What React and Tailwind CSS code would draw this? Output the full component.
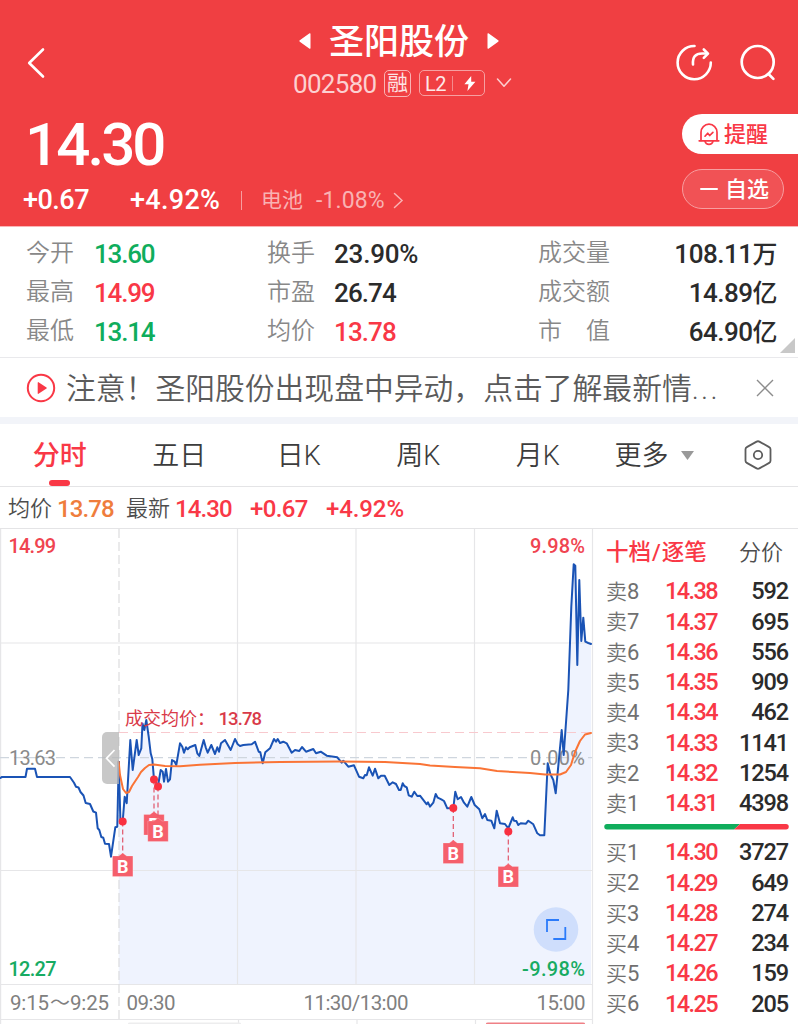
import React from "react";

const stats = [
  [
    { label: "今开", value: "13.60", color: "text-[#0fad5c]" },
    { label: "最高", value: "14.99", color: "text-[#f93846]" },
    { label: "最低", value: "13.14", color: "text-[#0fad5c]" },
  ],
  [
    { label: "换手", value: "23.90%", color: "text-[#2b2b2b]" },
    { label: "市盈", value: "26.74", color: "text-[#2b2b2b]" },
    { label: "均价", value: "13.78", color: "text-[#f93846]" },
  ],
  [
    { label: "成交量", value: "108.11", unit: "万", color: "text-[#2b2b2b]" },
    { label: "成交额", value: "14.89", unit: "亿", color: "text-[#2b2b2b]" },
    { label: "市　值", value: "64.90", unit: "亿", color: "text-[#2b2b2b]" },
  ],
];

const tabs = ["分时", "五日", "日K", "周K", "月K"];

const sells = [
  ["卖", "8", "14.38", "592"],
  ["卖", "7", "14.37", "695"],
  ["卖", "6", "14.36", "556"],
  ["卖", "5", "14.35", "909"],
  ["卖", "4", "14.34", "462"],
  ["卖", "3", "14.33", "1141"],
  ["卖", "2", "14.32", "1254"],
  ["卖", "1", "14.31", "4398"],
];

const buys = [
  ["买", "1", "14.30", "3727"],
  ["买", "2", "14.29", "649"],
  ["买", "3", "14.28", "274"],
  ["买", "4", "14.27", "234"],
  ["买", "5", "14.26", "159"],
  ["买", "6", "14.25", "205"],
];

// call auction, 9:15 - 9:25
const auction =
  "0,778 2,777 25.5,777 27,768.7 35,768.7 37,777 70,777 74,782.7 76,786.7 78.5,787.5 80.5,792 83.5,795.5 85.7,803 90,804 93.3,811.5 96,812.7 97.7,828.3 99.3,830 101.3,837 103.3,837.7 105,843.7 109,844 111,856.7 115.3,827.3 117.3,826.7";

const price =
  "118.7,761.7 120.5,823 122.7,821 124.7,796.7 126.7,803.3 130.3,740 132.7,770 136.7,740 138.7,755 141.3,748.3 142.5,723.5 144.3,730 146.3,720 148.7,736.7 150.7,753.3 152.3,759 154,779.3 158,786 160.7,770 162.7,771.7 164,781.7 166,769 168,781.7 170,779.3 172,760 174.7,761.7 176.3,765 180,743.3 182.3,746.7 184,752.7 186,747.3 187.7,749.3 189.7,747.3 195.3,745 197.3,753.3 199.3,756 203.7,740 205.7,747.3 207.7,752.7 211.3,745 215,754 217.3,747.3 219,751.7 221,743.3 225,740 230.7,750 235,739 237.7,744.3 240,746 243.3,745 251.7,744.3 255,741.7 258.7,751.7 260.3,752.3 262.7,763.3 265.3,752.3 270,748.3 274,739 276,741.7 277.7,739 280,743 283.3,741.7 286.7,743.3 291.7,752.7 295,750 299.3,751 302,747 306,751.7 313.3,749 316,753.3 320.7,751.7 326.7,755.7 337.3,757.3 341.7,762.7 343.3,760.7 348.3,766.7 354,765.3 359,776.7 363.3,778.3 365,775 366.7,775.3 369,767.3 372.7,775.7 375,768.7 378.3,778.3 381,775.7 384.7,775.7 389.3,785 392.7,782.3 396,784 399,790 400.7,790 402.7,783.3 404.3,786 406.7,787.3 408.7,795.3 411.7,796.7 414.3,791.7 417.3,796 420,795.7 426.7,804.3 428,802.3 430,806.7 433.3,802.7 435.7,794 437.7,797.7 441.3,799.3 444,801 447.3,808.3 453.3,808 455.3,791.7 457.7,799.3 461,797 464,802.7 467.3,806.7 471.3,797 474.7,805 479.3,809.3 482.3,818.3 485,814 487.3,820 491.3,820.7 494.3,828.3 496.7,810.7 500,823.3 505,824 508.3,828.3 512.7,817.3 514,820.7 516.3,821 518.3,825 520.7,823.3 526,823.7 528.3,820.7 533.3,824.3 537.3,833.3 540,835.3 544.3,835.3 547.7,763.3 550.3,774 553.3,780 555.7,793.3 561.7,730 563.7,755 568.3,690 571.3,606.7 573.7,564.3 575.3,565.7 577.3,665 579.3,580 581.3,641 583.3,617.7 585.3,641.7 588.3,643 591,644";

const average =
  "118.7,762 120,775 123,789 126,793 129,792 132,786 138,777 141,772 145,768 149,765 154,764.5 165,766 180,766.3 200,764.8 235,763 280,762 340,761.5 385,762 420,764 430,765.5 455,767 480,768.3 497,771 530,773 545,774.5 560,774.5 566,772 571,765 575,752 580,741 585,734.5 591,733";

const trades = [
  { x: 122.7, y: 821.5, box: 856 },
  { x: 154, y: 779.5, box: 814.5 },
  { x: 158, y: 786.5, box: 821 },
  { x: 453.3, y: 808, box: 843 },
  { x: 508.3, y: 831.5, box: 866.5 },
];

const Header = () => {
  return (
    <header className="h-[226px] bg-[#f03f42] text-white">
      <div className="flex h-[112px] justify-between">
        <div className="w-[220px] pl-[26px] pt-[47px]">
          <svg width="20" height="32" viewBox="0 0 20 32" fill="none">
            <path
              d="M17 2.5 3.2 16 17 29.5"
              stroke="#fff"
              strokeWidth="2.6"
              strokeLinecap="round"
              strokeLinejoin="round"
            />
          </svg>
        </div>

        <div className="flex flex-col items-center pt-[22px]">
          <div className="flex h-[37px] items-center gap-[18px]">
            <svg width="12" height="16" viewBox="0 0 12 16">
              <path d="M11.5 1v14a.8.8 0 0 1-1.3.6L.8 8.7a.9.9 0 0 1 0-1.4L10.2.4a.8.8 0 0 1 1.3.6z" fill="#fff" />
            </svg>
            <p className="pt-[3px] text-[35px] leading-none font-medium">圣阳股份</p>
            <svg width="12" height="16" viewBox="0 0 12 16">
              <path d="M.5 1v14a.8.8 0 0 0 1.3.6l9.4-6.9a.9.9 0 0 0 0-1.4L1.8.4A.8.8 0 0 0 .5 1z" fill="#fff" />
            </svg>
          </div>
          <div className="mt-[10px] ml-[7px] flex h-[28px] items-center">
            <p className="w-[84px] pt-[2px] text-[26px] leading-none tracking-[-0.7px] text-[#fcd0d1]">
              002580
            </p>
            <p className="ml-[7px] flex h-[27px] w-[27px] items-center justify-center rounded-[5px] border border-[#f9b3b4] text-[21px] leading-none text-[#fde4e4]">
              融
            </p>
            <div className="ml-[8px] flex h-[26px] w-[66px] items-center rounded-[5px] border border-[#f6a0a1] pl-[5px]">
              <p className="w-[22px] pt-px text-[20px] leading-none tracking-[-0.5px] text-[#fde8e8]">
                L2
              </p>
              <span className="ml-[5px] h-[15px] w-px bg-[#f58a8c]" />
              <svg className="ml-[11px]" width="12" height="15" viewBox="0 0 12 15">
                <path d="M7.2 0 .4 8.3h4.1L3.4 15l8-9.2H7.2z" fill="#fff" />
              </svg>
            </div>
            <svg className="ml-[11px]" width="16" height="10" viewBox="0 0 16 10" fill="none">
              <path
                d="M1.5 1 8 8.2 14.5 1"
                stroke="#fcd0d1"
                strokeWidth="1.5"
                strokeLinecap="round"
                strokeLinejoin="round"
              />
            </svg>
          </div>
        </div>

        <div className="flex w-[220px] justify-end gap-[26px] pt-[43px] pr-[21px]">
          <svg width="38" height="38" viewBox="0 0 38 38" fill="none">
            <g stroke="#fff" strokeWidth="2.6" strokeLinecap="round" strokeLinejoin="round">
              <path d="M19.5 3A16.6 16.6 0 1 0 35.8 19.5" />
              <path d="M18 21.5c-.6-7.5 2.5-11 9-11h5" />
              <path d="M28.8 6.5 33 10.6l-4.2 4.2" />
            </g>
          </svg>
          <svg width="38" height="38" viewBox="0 0 38 38" fill="none">
            <g stroke="#fff" strokeWidth="2.7" strokeLinecap="round">
              <circle cx="18.7" cy="19" r="16" />
              <path d="m29.5 31 4.9 4.9" />
            </g>
          </svg>
        </div>
      </div>

      <div className="flex h-[114px] justify-between">
        <div>
          <p className="mt-[3px] pl-[25px] text-[60px] leading-none font-medium tracking-[-2.9px]">
            14.30
          </p>
          <div className="mt-[9px] flex h-[32px] items-center pl-[23px] leading-none">
            <p className="w-[107px] pt-px text-[27px] font-medium tracking-[-0.5px]">+0.67</p>
            <p className="w-[111px] pt-px text-[27px] font-medium tracking-[0.3px]">+4.92%</p>
            <span className="h-[19px] w-px bg-[#f79ea0]" />
            <p className="ml-[19px] w-[55px] text-[21px] text-[#f9b2b3]">电池</p>
            <p className="text-[23px] tracking-[0.1px] text-[#f9b2b3]">-1.08%</p>
            <svg className="ml-[8px]" width="11" height="17" viewBox="0 0 11 17" fill="none">
              <path d="m1.5 1.5 7.5 7-7.5 7" stroke="#f9b2b3" strokeWidth="1.5" strokeLinecap="round" />
            </svg>
          </div>
        </div>

        <div className="flex w-[116px] flex-col pt-[2px]">
          <button className="flex h-[40px] items-center rounded-l-full bg-white pl-[16px] text-[#f93846]">
            <svg width="22" height="23" viewBox="0 0 22 23" fill="none">
              <g stroke="#f93846" strokeWidth="1.7" strokeLinecap="round" strokeLinejoin="round">
                <path d="M3 17.5V9.2a8 8 0 0 1 16 0v8.3" />
                <path d="M1.2 17.8h19.6" />
                <path d="M7 18.4c1 4 7 4 8 0" />
                <path d="m7 13.2 2.7-3 2 2.3 3.2-3.2" />
              </g>
            </svg>
            <span className="ml-[4px] pt-[2px] text-[22px] leading-none font-medium">提醒</span>
          </button>
          <button className="mt-[15px] flex h-[40px] w-[102px] items-center rounded-full border border-[#f79ea0] bg-[#f15255] pl-[17px]">
            <span className="h-[2px] w-[18px] rounded bg-white" />
            <span className="ml-[7px] pt-[2px] text-[22px] leading-none font-medium">自选</span>
          </button>
        </div>
      </div>
    </header>
  );
};

const Stats = () => {
  return (
    <section className="flex h-[132px] border-t border-b border-t-[#fbb4b6] border-b-[#e9e9ec] pt-[7px] pl-[26px]">
      <div className="w-[241px]">
        {stats[0].map((s) => (
          <div key={s.label} className="flex h-[39px] items-center leading-none">
            <p className="w-[68px] pb-[2px] text-[24px] font-[350] text-[#888]">{s.label}</p>
            <p className={`pt-[1px] text-[26px] font-medium tracking-[-1.2px] ${s.color}`}>
              {s.value}
            </p>
          </div>
        ))}
      </div>
      <div className="w-[271px]">
        {stats[1].map((s) => (
          <div key={s.label} className="flex h-[39px] items-center leading-none">
            <p className="w-[67px] pb-[2px] text-[24px] font-[350] text-[#888]">{s.label}</p>
            <p
              className={`pt-[1px] text-[26px] font-medium ${
                s.value.includes("%") ? "tracking-[-0.2px]" : "tracking-[-0.9px]"
              } ${s.color}`}
            >
              {s.value}
            </p>
          </div>
        ))}
      </div>
      <div className="w-[239px]">
        {stats[2].map((s) => (
          <div key={s.label} className="flex h-[39px] items-center justify-between leading-none">
            <p className="pb-[2px] text-[24px] font-[350] text-[#888]">{s.label}</p>
            <p className={`pt-[1px] text-[26px] font-medium tracking-[-0.5px] ${s.color}`}>
              {s.value}
              <span className="text-[25px]">{s.unit}</span>
            </p>
          </div>
        ))}
      </div>
      <svg className="mt-auto mb-[4px] ml-[3px]" width="15" height="15" viewBox="0 0 15 15">
        <path d="M15 0v15H0z" fill="#c8c8c8" />
      </svg>
    </section>
  );
};

const Notice = () => {
  return (
    <section className="flex h-[66px] items-center border-b-[7px] border-[#f2f4f9] pl-[26px]">
      <svg width="30" height="30" viewBox="0 0 30 30" fill="none">
        <circle cx="15" cy="15" r="13.2" stroke="#f93846" strokeWidth="2" />
        <path d="M11.7 9.6v10.8a.5.5 0 0 0 .8.4l8-5.3a.6.6 0 0 0 0-1l-8-5.3a.5.5 0 0 0-.8.4z" fill="#f93846" />
      </svg>
      <p className="ml-[10px] w-[656px] pt-[3px] text-[29.8px] leading-none font-[350] whitespace-nowrap text-[#5a5a5a]">
        注意！圣阳股份出现盘中异动，点击了解最新情
        <span className="tracking-[2.2px]">...</span>
      </p>
      <svg className="ml-auto mr-[24px]" width="18" height="18" viewBox="0 0 18 18">
        <path d="m1 1 16 16M17 1 1 17" stroke="#8c8c8c" strokeWidth="1.4" />
      </svg>
    </section>
  );
};

const Tabs = () => {
  return (
    <nav className="flex h-[63px] border-b border-[#e4e4e6] text-[27px] leading-none text-[#3c3c3c]">
      {tabs.map((tab, i) => (
        <div key={tab} className="flex w-[119.5px] flex-col items-center pt-[19px]">
          <span className={i === 0 ? "font-medium text-[#f93846]" : "font-[350]"}>{tab}</span>
          {i === 0 && <span className="mt-[10px] h-[6px] w-[21px] rounded-full bg-[#f93846]" />}
        </div>
      ))}
      <div className="ml-[17px] flex h-[63px] items-center">
        <span className="w-[66px] pt-[2px] font-[350]">更多</span>
        <svg width="13" height="9" viewBox="0 0 13 9">
          <path d="M0 0h13L6.5 9z" fill="#999" />
        </svg>
      </div>
      <svg className="mt-[16px] ml-[50px]" width="28" height="30" viewBox="0 0 28 30" fill="none">
        <path
          d="M12.6 1.6a3 3 0 0 1 2.8 0l9.8 5.5a2.4 2.4 0 0 1 1.3 2.2v11.4a2.4 2.4 0 0 1-1.3 2.2l-9.8 5.5a3 3 0 0 1-2.8 0l-9.8-5.5a2.4 2.4 0 0 1-1.3-2.2V9.3a2.4 2.4 0 0 1 1.3-2.2z"
          stroke="#5c5c5c"
          strokeWidth="1.8"
        />
        <circle cx="14" cy="15" r="4.2" stroke="#5c5c5c" strokeWidth="1.8" />
      </svg>
    </nav>
  );
};

const Chart = () => {
  return (
    <svg className="shrink-0" width="594" height="495" viewBox="0 529 594 495">
      <polygon points={`118.7,984 ${price} 591,984`} fill="#eff3fe" />

      <g stroke="#e6e6e8" strokeWidth="1.2">
        <path d="M.6 529V1024M237.5 529V984M356 529V984M474.5 529V984M592.5 529V1024" />
        <path d="M0 643H592M0 870.5H592M0 984.5H592M0 1019.5H592" />
        <path d="M238.5 1020v4M357 1020v4M475.5 1020v4" />
      </g>
      <path d="M119 529V1019" stroke="#dcdcde" strokeWidth="1.2" strokeDasharray="9 4" />
      <path d="M0 757.7H592" stroke="#cfd6de" strokeWidth="1.2" strokeDasharray="9 5" />
      <path d="M119 732.5H592" stroke="#f8c9ce" strokeWidth="1.2" strokeDasharray="9 5" />
      <path d="M128 1024v-.5q0-1 2-1h109q2 0 2 1v.5z" fill="#ededee" />
      <path d="M486 1024v-.5q0-1 2-1h95q2 0 2 1v.5z" fill="#ef8086" />

      <g fontSize="20" fill="#8a8a8a">
        <text x="9" y="765" textLength="47">13.63</text>
        <text x="530" y="765" textLength="55">0.00%</text>
      </g>

      <g fill="none" strokeLinejoin="round" strokeLinecap="round">
        <polyline points={`${auction} 118.7,761.7`} stroke="#1a53b5" strokeWidth="2" />
        <polyline points={price} stroke="#1a53b5" strokeWidth="2" />
        <polyline points={average} stroke="#fa7436" strokeWidth="2" />
      </g>

      <path d="M119 732h-12a5 5 0 0 0-5 5v42a5 5 0 0 0 5 5h12z" fill="#b5b5b5" fillOpacity=".75" />
      <path d="m114.5 750-8 8.3 8 8.3" fill="none" stroke="#fff" strokeWidth="1.7" />

      <g fill="#d93a49">
        <text x="125" y="725" fontSize="18" fontWeight="400">成交均价：</text>
        <text x="218.5" y="725" fontSize="18.5" fontWeight="500" textLength="43.5">13.78</text>
      </g>

      {trades.map((t) => (
        <g key={t.x}>
          <path
            d={`M${t.x} ${t.y}V${t.box - 2}`}
            stroke="#e0566a"
            strokeWidth="1.2"
            strokeDasharray="5 3"
          />
          <circle cx={t.x} cy={t.y} r="4" fill="#f93040" />
          <path
            d={`M${t.x - 10.2} ${t.box}h6.2l4-3 4 3h6.2v20.5h-20.4z`}
            fill="#f55f6c"
            stroke="#fff"
            strokeOpacity=".35"
            strokeWidth=".6"
          />
          <text
            x={t.x}
            y={t.box + 16.6}
            textAnchor="middle"
            fontSize="18"
            fontWeight="700"
            fill="#fff"
          >
            B
          </text>
        </g>
      ))}

      <circle cx="556" cy="929.5" r="22.3" fill="#cfdefc" />
      <path
        d="M547 932v-12h12M565.3 927v12h-12"
        fill="none"
        stroke="#2b7bfa"
        strokeWidth="1.8"
      />

      <g fontSize="20" fontWeight="500">
        <text x="8.5" y="553" fill="#f04450" textLength="47.5">14.99</text>
        <text x="530" y="553" fill="#f04450" textLength="55">9.98%</text>
        <text x="8.5" y="976" fill="#17ab62" textLength="48">12.27</text>
        <text x="522" y="976" fill="#17ab62" textLength="63">-9.98%</text>
      </g>
      <g fontSize="20.5" fill="#808080">
        <text x="10" y="1010" textLength="39">9:15</text>
        <text x="50" y="1010" fontSize="20" textLength="18">～</text>
        <text x="70" y="1010" textLength="39">9:25</text>
        <text x="126.5" y="1010" textLength="49">09:30</text>
        <text x="303.5" y="1010" textLength="105">11:30/13:00</text>
        <text x="536.5" y="1010" textLength="49">15:00</text>
      </g>
    </svg>
  );
};

const OrderRow = ({ row }) => {
  const [side, level, cost, volume] = row;
  return (
    <div className="flex h-[30.25px] items-center leading-none">
      <p className="w-[59px] text-[21px] font-[350] text-[#707070]">
        {side}
        <span className="text-[22px] font-normal">{level}</span>
      </p>
      <p className="text-[23.5px] font-medium tracking-[-1.6px] text-[#f93846]">{cost}</p>
      <p className="ml-auto text-[23.5px] font-medium tracking-[-1.1px] text-[#2b2b2b]">{volume}</p>
    </div>
  );
};

const OrderBook = () => {
  return (
    <aside className="flex-1 border-t border-[#e4e4e6] pt-[9px] pr-[12px] pl-[12px]">
      <div className="flex h-[29px] items-center justify-between pr-[6px] leading-none">
        <p className="text-[22.5px] font-medium text-[#f93846]">
          十档<span className="px-px">/</span>逐笔
        </p>
        <p className="text-[22px] font-[350] text-[#4d4d4d]">分价</p>
      </div>
      <div className="mt-[10px] pr-px">
        {sells.map((row) => (
          <OrderRow key={row[2]} row={row} />
        ))}
      </div>
      <svg className="mt-[5px] -ml-[2px]" width="185" height="6" viewBox="0 0 185 6">
        <path d="M3 0h133l-6 5.5H3A2.75 2.75 0 0 1 3 0z" fill="#0fad5c" />
        <path d="M136 0h46a2.75 2.75 0 0 1 0 5.5h-52z" fill="#f93846" />
      </svg>
      <div className="mt-[8px] pr-px">
        {buys.map((row) => (
          <OrderRow key={row[2]} row={row} />
        ))}
        <OrderRow row={["买", "7", "", ""]} />
      </div>
    </aside>
  );
};

const App = () => {
  return (
    <div className="h-[1024px] w-[798px] overflow-hidden bg-white font-['Roboto','Noto_Sans_CJK_SC',sans-serif]">
      <Header />
      <Stats />
      <Notice />
      <Tabs />
      <div className="flex h-[41px] items-center pt-[2px] pl-[8px] leading-none">
        <p className="w-[49px] text-[22px] font-[350] text-[#4d4d4d]">均价</p>
        <p className="w-[69px] text-[24px] font-medium tracking-[-0.9px] text-[#ef7d3c]">13.78</p>
        <p className="w-[49px] text-[22px] font-[350] text-[#4d4d4d]">最新</p>
        <p className="w-[75px] text-[24px] font-medium tracking-[-0.9px] text-[#f93846]">14.30</p>
        <p className="w-[76px] text-[24px] font-medium tracking-[-0.6px] text-[#f93846]">+0.67</p>
        <p className="text-[24px] font-medium tracking-[-0.1px] text-[#f93846]">+4.92%</p>
      </div>
      <div className="flex h-[496px]">
        <div className="border-t border-[#e4e4e6]">
          <Chart />
        </div>
        <OrderBook />
      </div>
    </div>
  );
};

export default App;
